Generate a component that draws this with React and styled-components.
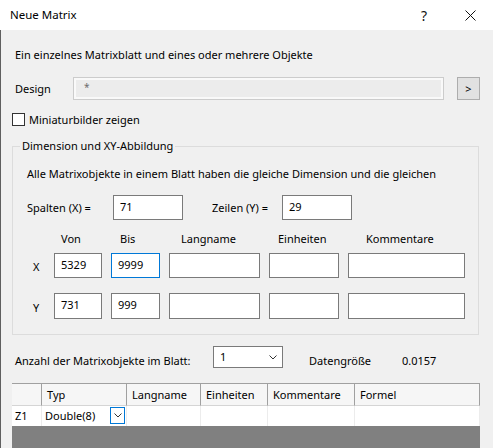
import React from "react";
import styled, { createGlobalStyle } from "styled-components";

const GlobalStyle = createGlobalStyle`
  body {
    margin: 0;
    font-family: "Noto Sans", "Open Sans", sans-serif;
    font-size: 11px;
    color: #000;
  }
`;

const ChevronDown = () => (
  <svg width="8" height="5" viewBox="0 0 8 5">
    <path d="M0.5 0.5 L4 4 L7.5 0.5" fill="none" stroke="#333" strokeWidth="1" />
  </svg>
);

const AXIS_ROWS = [
  { axis: "X", h: 25, von: "5329", bis: "9999", focus: true, mt: 6 },
  { axis: "Y", h: 26, von: "731", bis: "999", focus: false, mt: 15 },
];

const App = () => {
  return (
    <>
      <GlobalStyle />
      <Window>
        <TitleBar>
          <Title>Neue Matrix</Title>
          <CaptionButton>?</CaptionButton>
          <CaptionButton>
            <svg width="11" height="11" viewBox="0 0 11 11">
              <path d="M0.5 0.5 L10.5 10.5 M10.5 0.5 L0.5 10.5" stroke="#111" strokeWidth="1" />
            </svg>
          </CaptionButton>
        </TitleBar>

        <Body>
          <Intro>Ein einzelnes Matrixblatt und eines oder mehrere Objekte</Intro>

          <DesignRow>
            <DesignLabel>Design</DesignLabel>
            <DisabledField>*</DisabledField>
            <SmallButton>&gt;</SmallButton>
          </DesignRow>

          <CheckRow>
            <CheckBox />
            <span>Miniaturbilder zeigen</span>
          </CheckRow>

          <Group>
            <Legend>Dimension und XY-Abbildung</Legend>
            <GroupInner>
              <div>Alle Matrixobjekte in einem Blatt haben die gleiche Dimension und die gleichen</div>
              <SizeRow>
                <SizeLabel $w={86}>Spalten (X) =</SizeLabel>
                <Field $w={70} $h={25}>71</Field>
                <SizeLabel $w={70} $ml={29}>Zeilen (Y) =</SizeLabel>
                <Field $w={70} $h={25}>29</Field>
              </SizeRow>

              <AxisRow $mt={11}>
                <span />
                <ColHead $pl={7}>Von</ColHead>
                <ColHead $pl={9}>Bis</ColHead>
                <ColHead $pl={12}>Langname</ColHead>
                <ColHead $pl={9}>Einheiten</ColHead>
                <ColHead $pl={18}>Kommentare</ColHead>
              </AxisRow>

              {AXIS_ROWS.map((r) => (
                <AxisRow key={r.axis} $mt={r.mt}>
                  <AxisLabel>{r.axis}</AxisLabel>
                  <Field $h={r.h}>{r.von}</Field>
                  <Field $h={r.h} $focus={r.focus}>{r.bis}</Field>
                  <Field $h={r.h} />
                  <Field $h={r.h} />
                  <Field $h={r.h} />
                </AxisRow>
              ))}
            </GroupInner>
          </Group>

          <CountRow>
            <CountLabel>Anzahl der Matrixobjekte im Blatt:</CountLabel>
            <Combo>
              <span>1</span>
              <ChevronDown />
            </Combo>
            <InfoLabel>Datengröße</InfoLabel>
            <span>0.0157</span>
          </CountRow>

          <Table>
            <HeadCell />
            <HeadCell>Typ</HeadCell>
            <HeadCell>Langname</HeadCell>
            <HeadCell>Einheiten</HeadCell>
            <HeadCell>Kommentare</HeadCell>
            <HeadCell>Formel</HeadCell>

            <Cell $pl={3}>Z1</Cell>
            <Cell $pl={3}>
              Double(8)
              <CellDrop>
                <ChevronDown />
              </CellDrop>
            </Cell>
            <Cell />
            <Cell />
            <Cell />
            <Cell />
            <Empty />
          </Table>
        </Body>
      </Window>
    </>
  );
};

export default App;

const Window = styled.div`
  width: 493px;
  height: 448px;
  overflow: hidden;
  background: #f0f0f0;
  display: flex;
  flex-direction: column;
`;

const TitleBar = styled.div`
  height: 30px;
  flex: none;
  background: #fff;
  display: flex;
  align-items: center;
`;

const Title = styled.div`
  flex: 1;
  padding-left: 10px;
  line-height: 16px;
  font-size: 11.5px;
`;

const CaptionButton = styled.div`
  width: 46px;
  height: 30px;
  display: flex;
  align-items: center;
  justify-content: center;
  font-size: 14px;
  color: #111;
`;

const Body = styled.div`
  flex: 1;
  border-left: 1px solid #5f5f5f;
  padding: 17px 0 0 11px;
  line-height: 16px;
`;

const Intro = styled.div`
  padding-left: 3px;
`;

const DesignRow = styled.div`
  display: flex;
  align-items: center;
  margin-top: 14px;
  padding-left: 3px;
`;

const DesignLabel = styled.div`
  width: 58px;
`;

const DisabledField = styled.div`
  width: 371px;
  height: 23px;
  box-sizing: border-box;
  border: 1px solid #cccccc;
  box-shadow: inset 0 0 0 2px #f9f9f9;
  background: #ececec;
  color: #6d6d6d;
  padding: 1px 0 0 10px;
  font-size: 10px;
`;

const SmallButton = styled.div`
  width: 23px;
  height: 23px;
  box-sizing: border-box;
  margin-left: 13px;
  border: 1px solid #adadad;
  background: #e1e1e1;
  display: flex;
  align-items: center;
  justify-content: center;
`;

const CheckRow = styled.div`
  display: flex;
  align-items: center;
  gap: 4px;
  margin-top: 13px;
  height: 13px;
`;

const CheckBox = styled.div`
  width: 13px;
  height: 13px;
  box-sizing: border-box;
  border: 1px solid #333;
  background: #fff;
`;

const Group = styled.fieldset`
  width: 467px;
  box-sizing: border-box;
  margin: 12px 0 0 0;
  padding: 0;
  border: 1px solid #dcdcdc;
  min-width: 0;
`;

const Legend = styled.legend`
  margin-left: 7px;
  padding: 0 2px;
  line-height: 16px;
`;

const GroupInner = styled.div`
  padding: 12px 0 15px 14px;
`;

const SizeRow = styled.div`
  display: flex;
  align-items: center;
  margin-top: 13px;
`;

const SizeLabel = styled.div`
  width: ${(p) => p.$w}px;
  margin-left: ${(p) => p.$ml || 0}px;
`;

const Field = styled.div`
  ${(p) => (p.$w ? `width: ${p.$w}px;` : "")}
  height: ${(p) => p.$h}px;
  box-sizing: border-box;
  border: 1px solid ${(p) => (p.$focus ? "#0078d7" : "#7a7a7a")};
  background: #fff;
  padding: 3px 0 0 6px;
`;

const AxisRow = styled.div`
  display: grid;
  grid-template-columns: 18px 48px 49px 91px 70px 117px;
  column-gap: 9px;
  align-items: center;
  margin-top: ${(p) => p.$mt}px;
`;

const ColHead = styled.div`
  padding-left: ${(p) => p.$pl}px;
`;

const AxisLabel = styled.div`
  padding-left: 6px;
  padding-top: 3px;
`;

const CountRow = styled.div`
  display: flex;
  align-items: flex-end;
  margin-top: 11px;
  padding-left: 3px;
`;

const CountLabel = styled.div`
  width: 198px;
`;

const Combo = styled.div`
  width: 70px;
  height: 22px;
  box-sizing: border-box;
  border: 1px solid #7a7a7a;
  background: #fff;
  display: flex;
  justify-content: space-between;
  padding: 2px 5px 0 6px;
  margin-bottom: 1px;
  & > svg {
    margin-top: 6px;
  }
`;

const InfoLabel = styled.div`
  width: 93px;
  margin-left: 26px;
`;

const Table = styled.div`
  margin-top: 14px;
  width: 468px;
  display: grid;
  grid-template-columns: 30px 85px 74px 67px 87px 1fr;
  grid-template-rows: 23px 20px 30px;
`;

const HeadCell = styled.div`
  border-top: 1px solid #a0a0a0;
  border-right: 1px solid #a0a0a0;
  border-bottom: 1px solid #d5d5d5;
  background: #f6f6f6;
  padding: 3px 0 0 5px;
  &:last-of-type {
    border-right: none;
  }
`;

const Cell = styled.div`
  background: #fff;
  border-right: 1px solid #ececec;
  padding: 2px 0 0 ${(p) => p.$pl || 0}px;
  position: relative;
  display: flex;
  align-items: flex-start;
`;

const CellDrop = styled.div`
  position: absolute;
  right: 1px;
  top: 1px;
  width: 15px;
  height: 17px;
  box-sizing: border-box;
  border: 1px solid #0078d7;
  display: flex;
  align-items: center;
  justify-content: center;
`;

const Empty = styled.div`
  grid-column: 1 / -1;
  background: #808080;
`;
